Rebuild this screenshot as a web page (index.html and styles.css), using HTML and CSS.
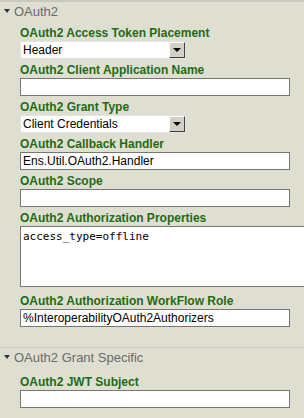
FILE: index.html
```html
<!DOCTYPE html>
<html lang="en">
<head>
    <meta charset="UTF-8">
    <title>OAuth2 Settings</title>
    <link rel="stylesheet" href="styles.css">
</head>
<body>
    <div class="section">
        <div class="section-head"><span class="caret"></span>OAuth2</div>
        <div class="fields">
            <div class="field">
                <label>OAuth2 Access Token Placement</label>
                <div class="select">
                    <span class="select-value">Header</span>
                    <span class="select-btn"><span class="arrow"></span></span>
                </div>
            </div>
            <div class="field">
                <label>OAuth2 Client Application Name</label>
                <input class="text" type="text" value="">
            </div>
            <div class="field">
                <label>OAuth2 Grant Type</label>
                <div class="select">
                    <span class="select-value">Client Credentials</span>
                    <span class="select-btn"><span class="arrow"></span></span>
                </div>
            </div>
            <div class="field">
                <label>OAuth2 Callback Handler</label>
                <input class="text" type="text" value="Ens.Util.OAuth2.Handler">
            </div>
            <div class="field">
                <label>OAuth2 Scope</label>
                <input class="text" type="text" value="">
            </div>
            <div class="field">
                <label>OAuth2 Authorization Properties</label>
                <textarea class="area">access_type=offline</textarea>
            </div>
            <div class="field">
                <label>OAuth2 Authorization WorkFlow Role</label>
                <input class="text" type="text" value="%InteroperabilityOAuth2Authorizers">
            </div>
        </div>
    </div>

    <div class="section next">
        <div class="section-head"><span class="caret"></span>OAuth2 Grant Specific</div>
        <div class="fields">
            <div class="field">
                <label>OAuth2 JWT Subject</label>
                <input class="text" type="text" value="">
            </div>
        </div>
    </div>
</body>
</html>
```

FILE: styles.css
```css
* {
    margin: 0;
    padding: 0;
    box-sizing: border-box;
}

body {
    font-family: "Liberation Sans", Arial, sans-serif;
    background: #dfdfd1;
    border-top: 2px solid #c8c8c0;
    overflow: hidden;
}

.section {
    overflow: hidden;
}

.section-head {
    display: flex;
    align-items: center;
    font-size: 13px;
    color: #6a6a6a;
    padding-left: 4px;
    height: 18px;
}

.caret {
    width: 0;
    height: 0;
    border-left: 3px solid transparent;
    border-right: 3px solid transparent;
    border-top: 4px solid #333;
    margin-right: 4px;
}

.fields {
    padding: 5px 0 0 20px;
    display: flex;
    flex-direction: column;
    gap: 3px;
}

.field {
    display: flex;
    flex-direction: column;
}

.field label {
    font-size: 12px;
    font-weight: bold;
    color: #1f6a17;
    line-height: 16px;
}

.text {
    width: 270px;
    height: 18px;
    border: 1px solid #767676;
    background: #fff;
    font-family: "Liberation Sans", Arial, sans-serif;
    font-size: 12px;
    padding: 0 2px;
    color: #000;
    outline: none;
}

.select {
    display: flex;
    width: 166px;
    height: 18px;
    background: #fff;
    border: 1px solid #e4e4e4;
}

.select-value {
    flex: 1;
    font-size: 12px;
    line-height: 16px;
    padding-left: 2px;
}

.select-btn {
    width: 16px;
    display: flex;
    align-items: center;
    justify-content: center;
    background: #d4d0c8;
    border-top: 1px solid #fff;
    border-left: 1px solid #fff;
    border-right: 1px solid #404040;
    border-bottom: 1px solid #404040;
}

.arrow {
    width: 0;
    height: 0;
    border-left: 4px solid transparent;
    border-right: 4px solid transparent;
    border-top: 4px solid #000;
}

.area {
    width: 285px;
    height: 61px;
    border: 1px solid #767676;
    background: #fff;
    font-family: "DejaVu Sans Mono", monospace;
    font-size: 11px;
    padding: 3px 2px;
    resize: none;
    outline: none;
    margin-bottom: 3px;
}

.next {
    margin-top: 20px;
    border-top: 1px solid #c8c8c0;
}

.next .fields {
    padding-top: 8px;
}
```
